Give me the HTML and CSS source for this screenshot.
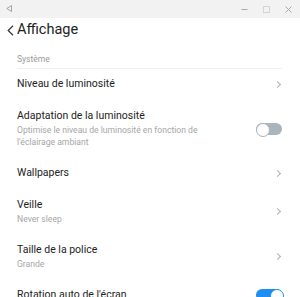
FILE: index.html
```
<!DOCTYPE html>
<html lang="fr">
<head>
<meta charset="utf-8">
<link rel="stylesheet" href="styles.css">
</head>
<body>
<div class="titlebar">
  <svg class="tb-back" width="6" height="7" viewBox="0 0 6 7"><path d="M5.5 0.5 L0.8 3.5 L5.5 6.5 Z" fill="none" stroke="#9a9a9a" stroke-width="0.9"/></svg>
  <div class="tb-right">
    <svg width="7" height="7" viewBox="0 0 7 7"><path d="M0.5 3.5 H6.5" stroke="#aaa" stroke-width="1"/></svg>
    <svg width="7" height="7" viewBox="0 0 7 7"><rect x="0.5" y="0.5" width="6" height="6" fill="none" stroke="#d4d4d4" stroke-width="1"/></svg>
    <svg width="7" height="7" viewBox="0 0 7 7"><path d="M0.5 0.5 L6.5 6.5 M6.5 0.5 L0.5 6.5" stroke="#aaa" stroke-width="1"/></svg>
  </div>
</div>
<header class="header">
  <svg class="back" width="7" height="11" viewBox="0 0 7 11"><path d="M6 0.8 L1.2 5.5 L6 10.2" fill="none" stroke="#333" stroke-width="1.2"/></svg>
  <h1 class="title">Affichage</h1>
</header>
<main class="content">
  <div class="section">Système</div>
  <div class="row first">
    <div class="text"><div class="label">Niveau de luminosité</div></div>
    <span class="chev"></span>
  </div>
  <div class="row">
    <div class="text">
      <div class="label">Adaptation de la luminosité</div>
      <div class="sub">Optimise le niveau de luminosité en fonction de l'éclairage ambiant</div>
    </div>
    <span class="toggle"></span>
  </div>
  <div class="row">
    <div class="text"><div class="label">Wallpapers</div></div>
    <span class="chev"></span>
  </div>
  <div class="row">
    <div class="text">
      <div class="label">Veille</div>
      <div class="sub">Never sleep</div>
    </div>
    <span class="chev"></span>
  </div>
  <div class="row">
    <div class="text">
      <div class="label">Taille de la police</div>
      <div class="sub">Grande</div>
    </div>
    <span class="chev"></span>
  </div>
  <div class="row">
    <div class="text"><div class="label">Rotation auto de l'écran</div></div>
    <span class="toggle on"></span>
  </div>
</main>
</body>
</html>
```
FILE: styles.css
```
* { box-sizing: border-box; }
html, body { margin: 0; padding: 0; background: #fff; }
body {
  font-family: Roboto, "Noto Sans", sans-serif;
  color: #222;
  width: 300px;
  height: 297px;
  overflow: hidden;
}
.titlebar {
  height: 18px;
  background: #f2f2f2;
  display: flex;
  align-items: center;
  padding: 0 8px 0 6px;
}
.tb-back { margin-top: -1px; }
.tb-right {
  margin-left: auto;
  display: flex;
  gap: 15px;
  align-items: center;
}
.header {
  display: flex;
  align-items: center;
  height: 24px;
  padding-left: 7px;
}
.back { margin-top: 1px; margin-right: 3px; }
.title {
  margin: 0;
  font-size: 14.5px;
  font-weight: 400;
  line-height: 24px;
  color: #222;
}
.content {
  padding: 0 18px 0 17px;
}
.section {
  margin-top: 11px;
  font-size: 8.5px;
  line-height: 12px;
  color: #999;
  padding-bottom: 3px;
  border-bottom: 1px solid #eeeeee;
}
.row {
  display: flex;
  align-items: center;
  padding: 9px 0;
}
.row.first { padding-top: 8px; }
.text { flex: 1; min-width: 0; }
.label {
  font-size: 10.5px;
  line-height: 14px;
  color: #222;
}
.sub {
  margin-top: 1px;
  font-size: 8.6px;
  line-height: 12px;
  color: #a6a6a6;
  max-width: 195px;
}
.chev {
  width: 5px;
  height: 5px;
  border-top: 1px solid #b0b0b0;
  border-right: 1px solid #b0b0b0;
  transform: rotate(45deg);
  margin-right: 2px;
}
.toggle {
  position: relative;
  width: 26px;
  height: 12px;
  border-radius: 6px;
  background: #a9b4bd;
  flex: none;
}
.toggle::after {
  content: "";
  position: absolute;
  left: 0;
  top: 0;
  width: 12px;
  height: 12px;
  border-radius: 50%;
  background: #fff;
  border: 1.5px solid #a9b4bd;
}
.toggle.on { background: #1e8ef2; }
.toggle.on::after { left: 14px; border-color: #1e8ef2; }
```
